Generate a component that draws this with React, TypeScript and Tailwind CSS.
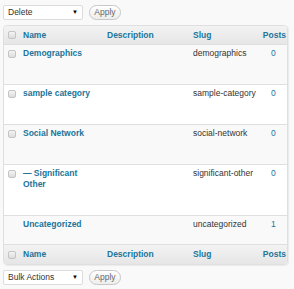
import React from 'react';

interface Category {
  name: string[];
  slug: string;
  count: number;
  alt: boolean;
  rowH: string;
  cb: boolean;
}

const categories: Category[] = [
  { name: ['Demographics'], slug: 'demographics', count: 0, alt: true, rowH: 'h-[40px]', cb: true },
  { name: ['sample category'], slug: 'sample-category', count: 0, alt: false, rowH: 'h-[40px]', cb: true },
  { name: ['Social Network'], slug: 'social-network', count: 0, alt: true, rowH: 'h-[40px]', cb: true },
  { name: ['— Significant', 'Other'], slug: 'significant-other', count: 0, alt: false, rowH: 'h-[51px]', cb: true },
  { name: ['Uncategorized'], slug: 'uncategorized', count: 1, alt: true, rowH: 'h-[29px]', cb: false },
];

const cols = 'grid grid-cols-[16px_84px_86px_71px_1fr]';

function Checkbox() {
  return (
    <span className="block w-[8px] h-[8px] rounded-[2px] border border-[#c4c4c4] bg-gradient-to-b from-[#f4f4f4] to-[#dcdcdc]" />
  );
}

function BulkBar({ label }: { label: string }) {
  return (
    <div className="flex items-center h-[15px]">
      <div className="relative w-[80px] h-[15px] bg-white border border-[#dcdcdc] rounded-[2px] pl-[4px] text-[8.5px] leading-[13px] text-[#333]">
        {label}
        <span className="absolute right-[4px] top-[0px] text-[6px] leading-[13px] text-black">▼</span>
      </div>
      <div className="ml-[6px] w-[32px] h-[15px] rounded-[8px] border border-[#c8c8c8] bg-gradient-to-b from-white to-[#ededed] text-[8.5px] leading-[13px] text-[#666] text-center">
        Apply
      </div>
    </div>
  );
}

function HeadRow({ top }: { top: boolean }) {
  return (
    <div
      className={`${cols} items-center h-[19px] bg-gradient-to-b from-[#f3f3f3] to-[#e6e6e6] font-bold text-[#21759b] ${top ? 'border-b border-[#dfdfdf]' : ''}`}
    >
      <div className="pl-[4px]"><Checkbox /></div>
      <div className="pl-[3px]">Name</div>
      <div className="pl-[3px]">Description</div>
      <div className="pl-[3px]">Slug</div>
      <div className="pr-[1px] text-right">Posts</div>
    </div>
  );
}

export default function App() {
  return (
    <div
      className="w-[294px] h-[289px] bg-[#f9f9f9] pt-[5px] px-[3px] text-[8.5px]"
      style={{ fontFamily: '"Liberation Sans", Arial, sans-serif' }}
    >
      <BulkBar label="Delete" />
      <div className="mt-[5px] w-[285px] border border-[#dfdfdf] rounded-[4px] overflow-hidden shadow-[1px_1px_1px_rgba(0,0,0,0.06)]">
        <HeadRow top />
        {categories.map((c) => (
          <div
            key={c.slug}
            className={`${cols} ${c.rowH} border-b border-[#dfdfdf] ${c.alt ? 'bg-[#f9f9f9]' : 'bg-white'}`}
          >
            <div className="pl-[4px] pt-[5px]">{c.cb && <Checkbox />}</div>
            <div className="pl-[3px] pt-[3px] font-bold text-[#21759b] leading-[11px]">
              {c.name.map((line) => (
                <div key={line}>{line}</div>
              ))}
            </div>
            <div />
            <div className="pl-[3px] pt-[3px] text-[8.5px] leading-[11px] text-[#333]">{c.slug}</div>
            <div className="pt-[3px] pl-[10px] text-[8.5px] leading-[11px] text-[#21759b]">{c.count}</div>
          </div>
        ))}
        <HeadRow top={false} />
      </div>
      <div className="mt-[5px]">
        <BulkBar label="Bulk Actions" />
      </div>
    </div>
  );
}
